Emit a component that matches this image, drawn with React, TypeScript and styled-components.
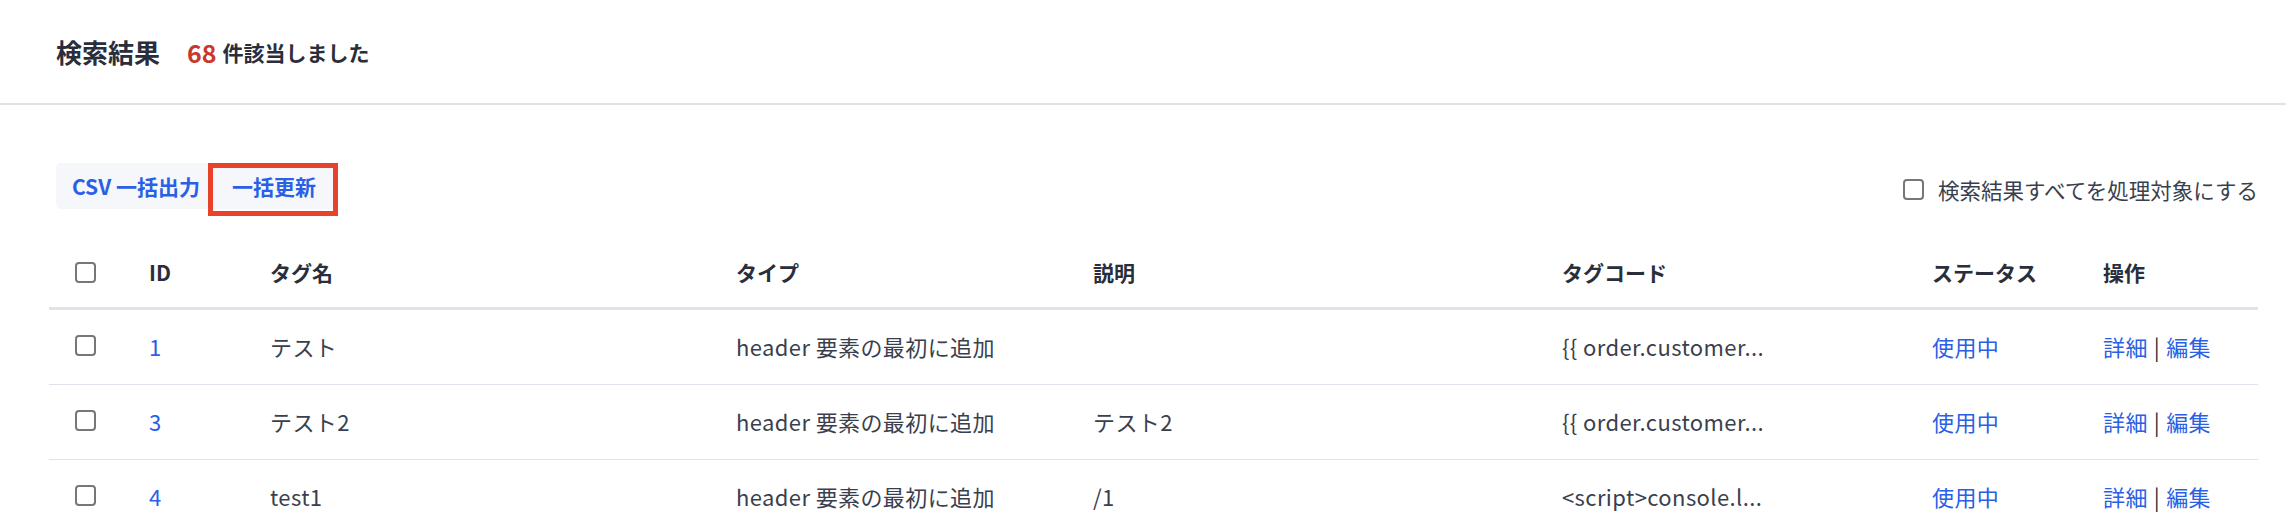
import React from 'react'
import styled, { createGlobalStyle } from 'styled-components'

const Colors = {
  text: '#2a2e3b',
  body: '#3a3f4e',
  blue: '#2a5fe6',
  red: '#c8392b',
  line: '#e2e2e2',
  tableLine: '#e3e2ec',
  buttonBg: '#f5f7fa',
  mark: '#e8422a'
}

const GlobalStyle = createGlobalStyle`
  body {
    margin: 0;
    background: #fff;
    font-family: 'Noto Sans CJK JP', 'Noto Sans', sans-serif;
    color: ${Colors.body};
  }
`

const rows = [
  { id: 1, name: 'テスト', type: 'header 要素の最初に追加', desc: '', code: '{{ order.customer...', status: '使用中' },
  { id: 3, name: 'テスト2', type: 'header 要素の最初に追加', desc: 'テスト2', code: '{{ order.customer...', status: '使用中' },
  { id: 4, name: 'test1', type: 'header 要素の最初に追加', desc: '/1', code: '<script>console.l...', status: '使用中' }
]

function App() {
  return (
    <>
      <GlobalStyle />
      <TopBar>
        <Title>検索結果</Title>
        <Count>68</Count>
        <CountLabel>件該当しました</CountLabel>
      </TopBar>
      <Content>
        <Toolbar>
          <ButtonGroup>
            <ActionButton>CSV 一括出力</ActionButton>
            <ActionButton $marked>一括更新</ActionButton>
          </ButtonGroup>
          <AllLabel>
            <Check type='checkbox' />
            検索結果すべてを処理対象にする
          </AllLabel>
        </Toolbar>
        <Table>
          <HeadRow>
            <Cell>
              <Check type='checkbox' />
            </Cell>
            <Cell>ID</Cell>
            <Cell>タグ名</Cell>
            <Cell>タイプ</Cell>
            <Cell>説明</Cell>
            <Cell>タグコード</Cell>
            <Cell>ステータス</Cell>
            <Cell>操作</Cell>
          </HeadRow>
          {rows.map((row) => (
            <BodyRow key={row.id}>
              <Cell>
                <Check type='checkbox' />
              </Cell>
              <Cell>
                <Link>{row.id}</Link>
              </Cell>
              <Cell>{row.name}</Cell>
              <Cell>{row.type}</Cell>
              <Cell>{row.desc}</Cell>
              <Cell>{row.code}</Cell>
              <Cell>
                <Link>{row.status}</Link>
              </Cell>
              <Cell>
                <Link>詳細</Link>
                <Divider>|</Divider>
                <Link>編集</Link>
              </Cell>
            </BodyRow>
          ))}
        </Table>
      </Content>
    </>
  )
}
export default App

const TopBar = styled.div`
  display: flex;
  align-items: center;
  height: 105px;
  padding: 0 56px;
  border-bottom: 2px solid ${Colors.line};
  box-sizing: border-box;
  color: ${Colors.text};
  font-weight: 700;
`
const Title = styled.span`
  font-size: 26px;
  margin-right: 27px;
`
const Count = styled.span`
  font-size: 25px;
  color: ${Colors.red};
  margin-right: 6px;
`
const CountLabel = styled.span`
  font-size: 21px;
`
const Content = styled.div`
  padding: 58px 28px 0 49px;
`
const Toolbar = styled.div`
  display: flex;
  align-items: center;
  justify-content: space-between;
  padding-left: 7px;
`
const ButtonGroup = styled.div`
  display: flex;
  height: 46px;
  background: ${Colors.buttonBg};
  border-radius: 5px;
`
const ActionButton = styled.button<{ $marked?: boolean }>`
  position: relative;
  display: flex;
  align-items: center;
  border: 0;
  background: transparent;
  font-family: inherit;
  font-size: 21px;
  font-weight: 700;
  color: ${Colors.blue};
  padding: ${(p) => (p.$marked ? '0 20px 0 24px' : '0 8px 0 16px')};
  width: ${(p) => (p.$marked ? '130px' : 'auto')};
  &::after {
    content: '';
    display: ${(p) => (p.$marked ? 'block' : 'none')};
    position: absolute;
    top: 0;
    left: 0;
    width: 100%;
    height: 53px;
    border: 5px solid ${Colors.mark};
    box-sizing: border-box;
  }
`
const AllLabel = styled.label`
  display: flex;
  align-items: center;
  gap: 14px;
  font-size: 21.5px;
  color: ${Colors.body};
  padding-top: 6px;
`
const Check = styled.input`
  appearance: none;
  margin: 0;
  width: 21px;
  height: 21px;
  border: 2px solid #777;
  border-radius: 4px;
  box-sizing: border-box;
  background: #fff;
`
const Table = styled.div`
  margin-top: 28px;
`
const rowGrid = `
  display: grid;
  grid-template-columns: 74px 121px 466px 357px 469px 370px 171px 181px;
  align-items: center;
`
const HeadRow = styled.div`
  ${rowGrid};
  height: 70px;
  border-bottom: 3px solid ${Colors.tableLine};
  font-weight: 700;
  color: ${Colors.text};
  font-size: 21px;
`
const BodyRow = styled.div`
  ${rowGrid};
  height: 75px;
  border-bottom: 1px solid ${Colors.tableLine};
  font-size: 22px;
  letter-spacing: 0.4px;
  color: ${Colors.body};
  padding-bottom: 3px;
  box-sizing: border-box;
`
const Cell = styled.div`
  display: flex;
  align-items: center;
  padding-left: 26px;
  white-space: nowrap;
`
const Link = styled.a`
  color: ${Colors.blue};
  cursor: pointer;
`
const Divider = styled.span`
  color: ${Colors.text};
  margin: 0 6px;
`
